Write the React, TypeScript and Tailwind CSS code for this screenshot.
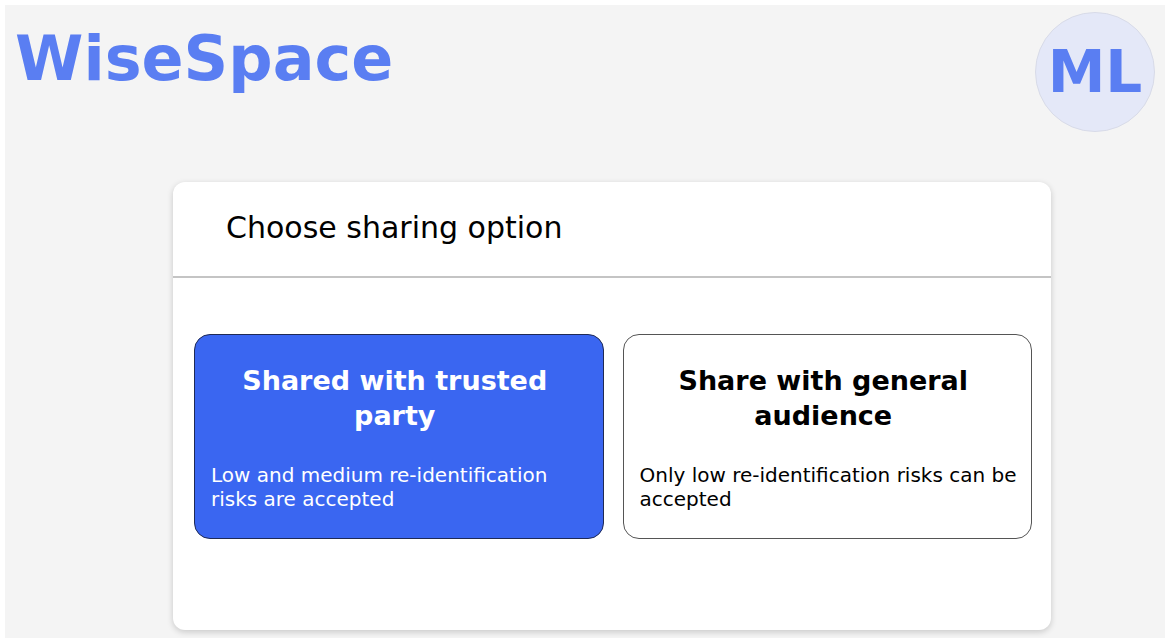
export default function App() {
  const font = { fontFamily: '"DejaVu Sans", "Noto Sans", sans-serif' };
  return (
    <div className="w-[1170px] h-[643px] bg-white p-[5px]" style={font}>
      <div className="w-full h-full bg-[#f4f4f4] flex flex-col">
        {/* top bar */}
        <div className="flex items-start justify-between pl-[10px] pr-[10px] pt-[7px] h-[170px]">
          <div className="text-[62px] leading-none font-bold text-[#5a7ef2] mt-[16px]">
            WiseSpace
          </div>
          <div className="w-[120px] h-[120px] rounded-full bg-[#e4e8f8] border border-[#d8dbe8] flex items-center justify-center">
            <span className="text-[58px] font-bold text-[#5a7ef2] leading-none">ML</span>
          </div>
        </div>

        {/* card */}
        <div className="ml-[168px] mt-[7px] w-[878px] h-[448px] bg-white rounded-[12px] shadow-[0_2px_6px_rgba(0,0,0,0.18)] flex flex-col">
          <div className="h-[96px] flex items-center pl-[53px] pb-[4px] border-b-2 border-[#c4c4c4]">
            <h2 className="text-[30px] font-medium text-black">Choose sharing option</h2>
          </div>
          <div className="grid grid-cols-2 gap-[19px] pl-[21px] pr-[19px] pt-[56px]">
            <div className="h-[205px] rounded-[16px] bg-[#3a66f1] border border-[#1f2a55] pt-[28px]">
              <h3 className="pl-[8px] pr-[16px] text-[27px] font-bold text-white text-center leading-[35px]">
                Shared with trusted party
              </h3>
              <p className="mt-[30px] pl-[16px] pr-[8px] text-[20px] text-white leading-[24px]">
                Low and medium re-identification risks are accepted
              </p>
            </div>
            <div className="h-[205px] rounded-[16px] bg-white border border-[#555] pt-[28px]">
              <h3 className="pl-[8px] pr-[16px] text-[27px] font-bold text-black text-center leading-[35px]">
                Share with general audience
              </h3>
              <p className="mt-[30px] pl-[16px] pr-[8px] text-[20px] text-black leading-[24px]">
                Only low re-identification risks can be accepted
              </p>
            </div>
          </div>
        </div>
      </div>
    </div>
  );
}
